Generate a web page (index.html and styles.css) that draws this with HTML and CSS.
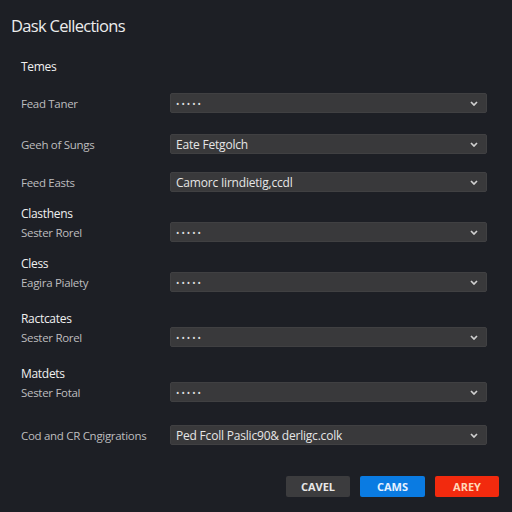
FILE: index.html
```html
<!DOCTYPE html>
<html lang="en">
<head>
    <meta charset="UTF-8">
    <meta name="viewport" content="width=device-width, initial-scale=1.0">
    <title>Dask Cellections</title>
    <link rel="stylesheet" href="styles.css">
</head>
<body>
    <main class="panel">
        <h1 class="title">Dask Cellections</h1>
        <form class="settings">
            <div class="group first">
                <div class="group-title">Temes</div>
                <div class="field">
                    <label>Fead Taner</label>
                    <div class="select"><span class="dots">•••••</span><svg class="chev" viewBox="0 0 8 5"><polyline points="1,1 4,4 7,1"/></svg></div>
                </div>
                <div class="field loose">
                    <label>Geeh of Sungs</label>
                    <div class="select"><span>Eate Fetgolch</span><svg class="chev" viewBox="0 0 8 5"><polyline points="1,1 4,4 7,1"/></svg></div>
                </div>
                <div class="field">
                    <label>Feed Easts</label>
                    <div class="select"><span>Camorc Iirndietig,ccdl</span><svg class="chev" viewBox="0 0 8 5"><polyline points="1,1 4,4 7,1"/></svg></div>
                </div>
            </div>
            <div class="group">
                <div class="group-title">Clasthens</div>
                <div class="field tight">
                    <label>Sester Rorel</label>
                    <div class="select"><span class="dots">•••••</span><svg class="chev" viewBox="0 0 8 5"><polyline points="1,1 4,4 7,1"/></svg></div>
                </div>
            </div>
            <div class="group">
                <div class="group-title">Cless</div>
                <div class="field tight">
                    <label>Eagira Pialety</label>
                    <div class="select"><span class="dots">•••••</span><svg class="chev" viewBox="0 0 8 5"><polyline points="1,1 4,4 7,1"/></svg></div>
                </div>
            </div>
            <div class="group wide">
                <div class="group-title">Ractcates</div>
                <div class="field tight">
                    <label>Sester Rorel</label>
                    <div class="select"><span class="dots">•••••</span><svg class="chev" viewBox="0 0 8 5"><polyline points="1,1 4,4 7,1"/></svg></div>
                </div>
            </div>
            <div class="group wide">
                <div class="group-title">Matdets</div>
                <div class="field tight">
                    <label>Sester Fotal</label>
                    <div class="select"><span class="dots">•••••</span><svg class="chev" viewBox="0 0 8 5"><polyline points="1,1 4,4 7,1"/></svg></div>
                </div>
            </div>
            <div class="field last">
                <label>Cod and CR Cngigrations</label>
                <div class="select"><span>Ped Fcoll Paslic90&amp; derligc.colk</span><svg class="chev" viewBox="0 0 8 5"><polyline points="1,1 4,4 7,1"/></svg></div>
            </div>
        </form>
        <div class="actions">
            <button type="button" class="btn btn-cancel">Cavel</button>
            <button type="button" class="btn btn-blue">Cams</button>
            <button type="button" class="btn btn-red">Arey</button>
        </div>
    </main>
</body>
</html>
```

FILE: styles.css
```css
html, body { margin: 0; padding: 0; }
body { background: #1d1f25; font-family: "Open Sans", "Liberation Sans", sans-serif; color: #e4e4e4; width: 512px; height: 512px; overflow: hidden; }
.panel { padding: 15px 0 0 11px; }
.title { margin: 0; font-size: 16.5px; font-weight: normal; line-height: 22px; color: #ececec; letter-spacing: -0.7px; }
.settings { padding-left: 10px; width: 466px; }
.group { margin-top: 14px; }
.group.first { margin-top: 22px; }
.group.wide { margin-top: 19px; }
.group-title { font-size: 12px; line-height: 16px; color: #f0f0f0; letter-spacing: -0.3px; }
.field { display: grid; grid-template-columns: 149px 317px; align-items: center; margin-top: 18px; }
.field.loose { margin-top: 21px; }
.field.tight { margin-top: 0; }
.field.last { margin-top: 23px; }
.field label { font-size: 11.5px; color: #bdbdbf; white-space: nowrap; letter-spacing: -0.3px; }
.select { height: 20px; box-sizing: border-box; background: #39393b; border: 1px solid #404042; border-radius: 2px; display: flex; align-items: center; justify-content: space-between; padding: 0 8px 0 5px; font-size: 12px; color: #e6e6e6; letter-spacing: -0.2px; }
.select .dots { font-size: 9px; letter-spacing: 2px; color: #e2e2e2; }
.chev { width: 8px; height: 5px; fill: none; stroke: #d0d0d0; stroke-width: 1.7; }
.actions { display: flex; justify-content: flex-end; gap: 10px; padding-right: 13px; margin-top: 31px; }
.btn { height: 21px; width: 64px; border: none; border-radius: 2px; font-family: "Open Sans", "Liberation Sans", sans-serif; font-size: 11px; font-weight: bold; text-transform: uppercase; padding: 0; }
.btn-cancel { background: #3c3c3e; color: #e8e8e8; }
.btn-blue { background: #0a7be2; color: #e6f1ff; width: 65px; }
.btn-red { background: #f22a0e; color: #ffd6b8; }
```
